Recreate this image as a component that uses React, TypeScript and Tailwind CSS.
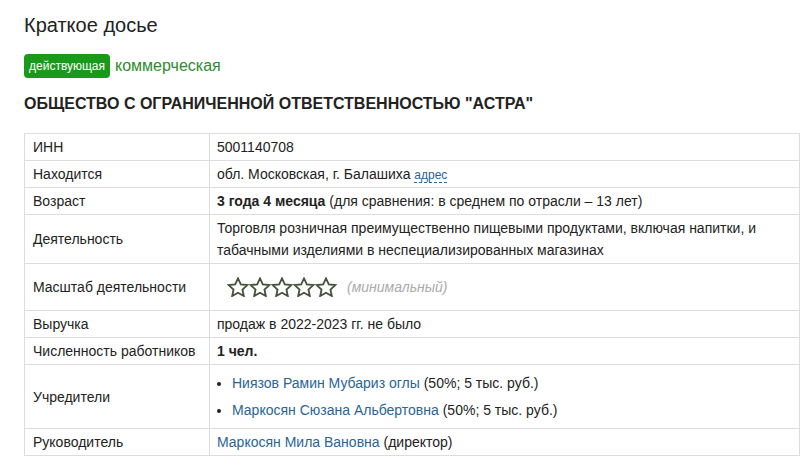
import React from "react";

// звезда масштаба
const Star = () => (
    <svg width="22" height="20" viewBox="0 0 24 22" fill="none">
        <path
            d="M12 1.5l3.1 6.6 7.2.8-5.4 4.9 1.5 7.1L12 17.3l-6.4 3.6 1.5-7.1-5.4-4.9 7.2-.8z"
            stroke="#44533a"
            strokeWidth="2"
            strokeLinejoin="miter"
        />
    </svg>
);

const rows: { label: string; value: React.ReactNode; cls?: string }[] = [
    { label: "ИНН", value: "5001140708" },
    {
        label: "Находится",
        value: (
            <>
                обл. Московская, г. Балашиха{" "}
                <span className="text-[12px] text-[#2a6496] border-b border-dashed border-[#2a6496] leading-[13px] inline-block">адрес</span>
            </>
        ),
    },
    {
        label: "Возраст",
        value: (
            <>
                <b>3 года 4 месяца</b> (для сравнения: в среднем по отрасли – 13 лет)
            </>
        ),
    },
    {
        label: "Деятельность",
        value: "Торговля розничная преимущественно пищевыми продуктами, включая напитки, и табачными изделиями в неспециализированных магазинах",
    },
    {
        label: "Масштаб деятельности",
        cls: "py-[12px]",
        value: (
            <div className="flex items-center gap-[10px] pl-[10px]">
                <div className="flex">
                    <Star /><Star /><Star /><Star /><Star />
                </div>
                <i className="text-[#aaa]">(минимальный)</i>
            </div>
        ),
    },
    { label: "Выручка", value: "продаж в 2022-2023 гг. не было" },
    { label: "Численность работников", value: <b>1 чел.</b> },
    {
        label: "Учредители",
        cls: "py-[7px]",
        value: (
            <ul className="list-disc pl-[15px] flex flex-col gap-[5px]">
                <li><span className="text-[#2a6496]">Ниязов Рамин Мубариз оглы</span> (50%; 5 тыс. руб.)</li>
                <li><span className="text-[#2a6496]">Маркосян Сюзана Альбертовна</span> (50%; 5 тыс. руб.)</li>
            </ul>
        ),
    },
    {
        label: "Руководитель",
        value: (
            <>
                <span className="text-[#2a6496]">Маркосян Мила Вановна</span> (директор)
            </>
        ),
    },
];

const App = () => {
    return (
        <div className="w-[806px] h-[463px] bg-white overflow-hidden pl-[24px] pt-[11px] font-['Liberation_Sans',Arial,sans-serif] text-[#222]">
            <h1 className="text-[20px] leading-[28px]">Краткое досье</h1>

            <div className="flex items-center gap-[5px] mt-[15px]">
                <span className="bg-[#1a9a1a] text-white text-[12px] rounded-[4px] px-[5px] leading-[24px]">действующая</span>
                <span className="text-[#2e8b2e] text-[16px]">коммерческая</span>
            </div>

            <h2 className="font-bold text-[16px] leading-[20px] mt-[16px]">
                ОБЩЕСТВО С ОГРАНИЧЕННОЙ ОТВЕТСТВЕННОСТЬЮ "АСТРА"
            </h2>

            <table className="mt-[19px] w-[776px] border-collapse text-[14px] leading-[22px]">
                <tbody>
                    {rows.map((r) => (
                        <tr key={r.label}>
                            <td className="w-[185px] border border-[#dddddd] px-[8px] py-[2px] align-middle">{r.label}</td>
                            <td className={"border border-[#dddddd] px-[7px] align-middle " + (r.cls ?? "py-[2px]")}>{r.value}</td>
                        </tr>
                    ))}
                </tbody>
            </table>
        </div>
    );
};

export default App;
